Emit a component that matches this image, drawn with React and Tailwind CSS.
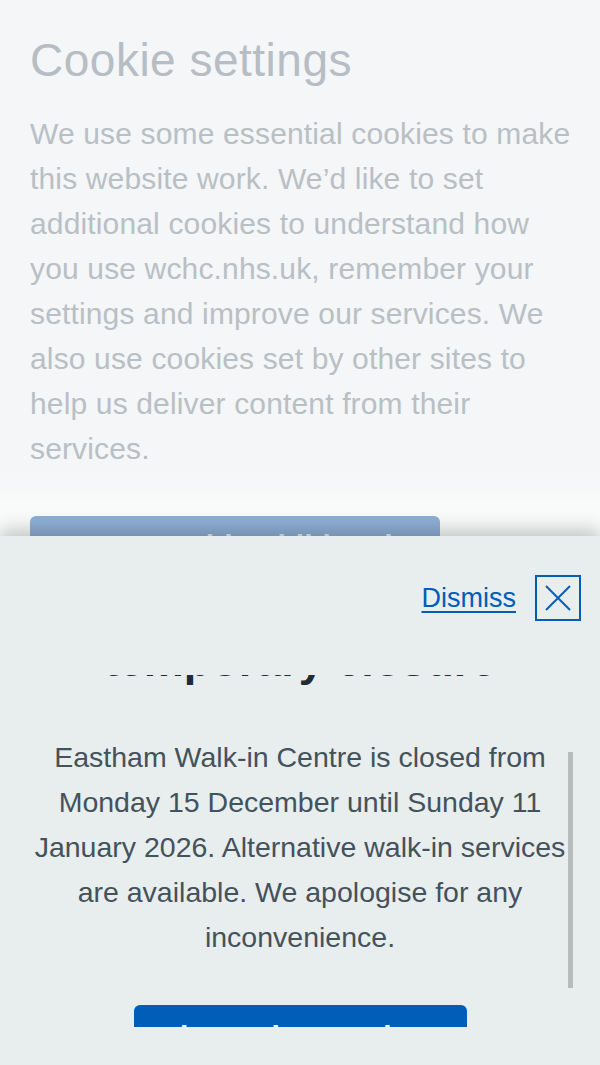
import React from 'react';

const font = { fontFamily: '"Liberation Sans", Arial, sans-serif' };

function CookieBanner() {
  return (
    <section className="h-[536px] overflow-hidden bg-[linear-gradient(to_bottom,#f4f6f7_0,#f4f6f7_470px,#f9fafa_505px)] px-[30px] pt-[32px]">
      <h2 className="text-[46px] leading-[56px] tracking-[0.5px] text-[#b6bdc4]">Cookie settings</h2>
      <p className="mt-[23px] whitespace-nowrap text-[30px] leading-[45px] tracking-[0.15px] text-[#b8bfc5]">
        We use some essential cookies to make
        <br />
        this website work. We’d like to set
        <br />
        additional cookies to understand how
        <br />
        you use wchc.nhs.uk, remember your
        <br />
        settings and improve our services. We
        <br />
        also use cookies set by other sites to
        <br />
        help us deliver content from their
        <br />
        services.
      </p>
      <button className="mt-[45px] h-[60px] w-[410px] rounded-[6px] bg-[#8eb0d6] pt-[12px] text-[30px] font-bold leading-[36px] text-[#e4ecf5]">
        I’m OK with additional cookies
      </button>
    </section>
  );
}

function CloseIcon() {
  return (
    <svg width="26" height="26" viewBox="0 0 26 26" fill="none" stroke="#005eb8" strokeWidth="2">
      <line x1="1" y1="1" x2="25" y2="25" />
      <line x1="25" y1="1" x2="1" y2="25" />
    </svg>
  );
}

function ClosureDrawer() {
  return (
    <section className="relative z-10 flex h-[529px] flex-col bg-[#e8edee] shadow-[0_-6px_18px_rgba(0,0,0,0.22)]">
      <div className="flex items-center justify-end gap-[19px] pr-[19px] pt-[39px]">
        <a href="#" className="text-[27px] leading-[34px] text-[#005eb8] underline underline-offset-[4px]">
          Dismiss
        </a>
        <button className="flex h-[46px] w-[46px] items-center justify-center border-2 border-[#005eb8]">
          <CloseIcon />
        </button>
      </div>
      <div className="relative mt-[54px] h-[352px] overflow-hidden">
        <div className="-mt-[98px] flex flex-col items-center px-[20px] text-center">
          <h2 className="whitespace-nowrap text-[45px] font-bold leading-[56px] text-[#212b32]">
            Eastham Walk-in Centre
            <br />
            temporary closure
          </h2>
          <p className="mt-[46px] whitespace-nowrap text-[28.5px] leading-[45px] text-[#44525c]">
            Eastham Walk-in Centre is closed from
            <br />
            Monday 15 December until Sunday 11
            <br />
            January 2026. Alternative walk-in services
            <br />
            are available. We apologise for any
            <br />
            inconvenience.
          </p>
          <button className="mt-[45px] w-[333px] rounded-[6px] bg-[#005eb8] px-[16px] pb-[14px] pt-[14px] text-[30px] font-bold leading-[36px] text-white">
            Alternative services
          </button>
        </div>
        <div className="absolute right-[27px] top-[77px] h-[236px] w-[5px] bg-[#b9bcbc]" />
      </div>
    </section>
  );
}

export default function App() {
  return (
    <div className="h-[1065px] w-[600px] overflow-hidden" style={font}>
      <CookieBanner />
      <ClosureDrawer />
    </div>
  );
}
